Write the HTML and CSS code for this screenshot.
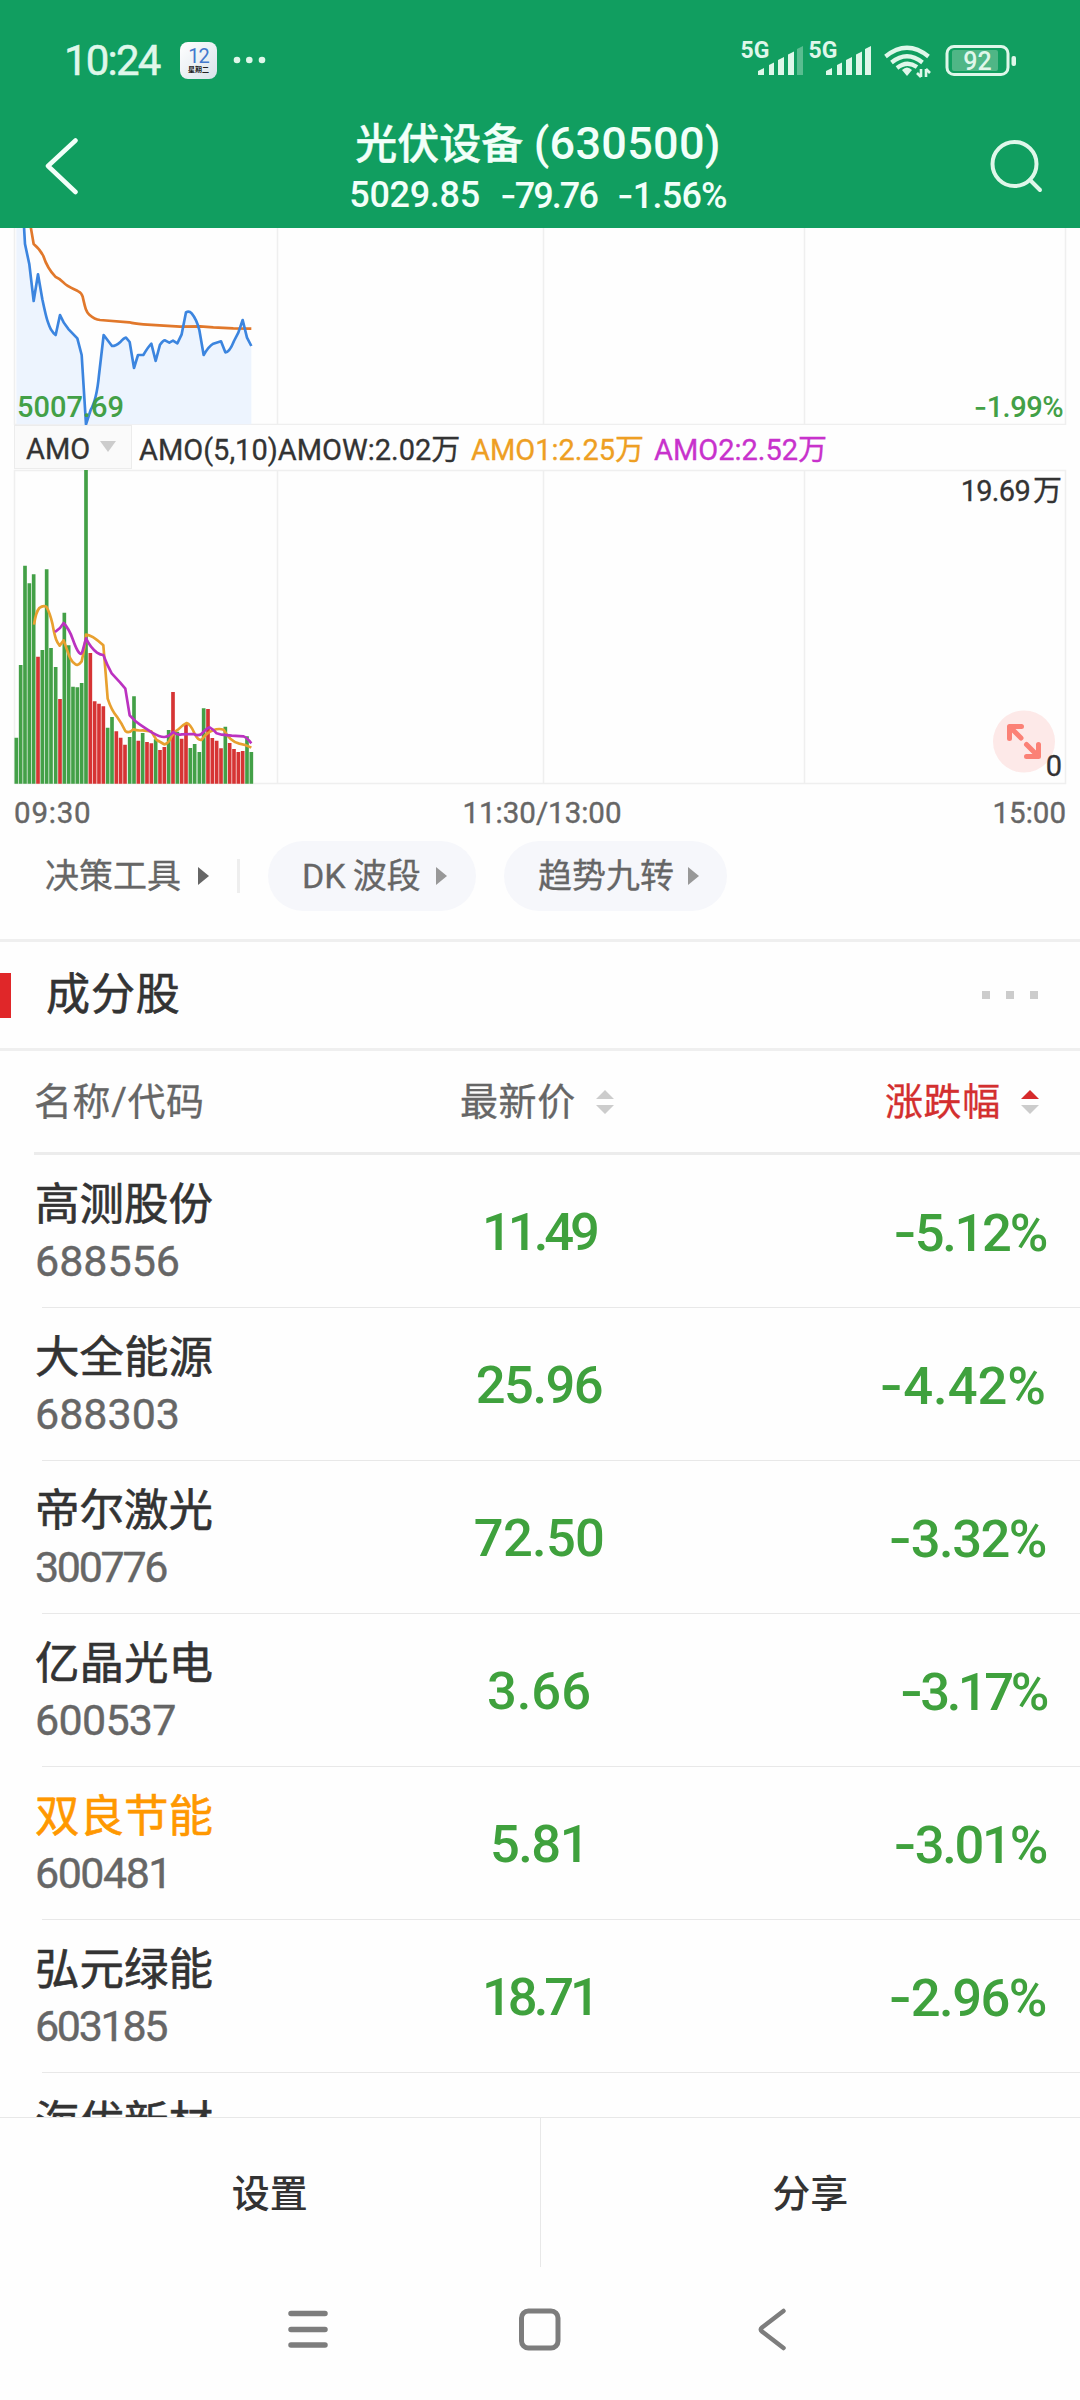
FILE: index.html
```html
<!DOCTYPE html>
<html lang="zh-CN">
<head>
<meta charset="utf-8">
<title>光伏设备 (630500)</title>
<link rel="stylesheet" href="styles.css">
</head>
<body>
<div class="screen">
  <header class="top">
    <div class="status">
      <span class="clock">10:24</span>
      <span class="calendar"><b>12</b><i>星期二</i></span>
      <svg class="more" width="34" height="10" viewBox="0 0 34 10"><circle cx="4" cy="5" r="3.3"/><circle cx="16.300" cy="5" r="3.3"/><circle cx="29" cy="5" r="3.3"/></svg>
      <svg class="signals" width="280" height="44" viewBox="0 0 280 44">
        <g class="glyph">
          <path d="M17 39v-4l6-3v7zM28 39v-10l5-2.500v12.500zM37 39v-15l6-3v18zM47 39v-20.500l6-3v23.500z"/>
          <path d="M56 39v-26l6-3v29z" opacity=".35"/>
          <g transform="translate(68)"><path d="M17 39v-4l6-3v7zM28 39v-10l5-2.500v12.500zM37 39v-15l6-3v18zM47 39v-20.500l6-3v23.500zM56 39v-26l6-3v29z"/></g>
          <path d="M161 34l5 6 5-6q-5-5-10 0z"/>
          <path d="M180 33v8M180 41l-4-4M185 41v-8M185 33l4 4" fill="none" stroke="#dff7ea" stroke-width="2.600"/>
        </g>
        <g fill="none" stroke="#dff7ea" stroke-width="4.200"><path d="M144.500 20.500q21.500-17.500 43 0M150.500 26.500q15.500-12.500 31 0M156 32q10-8 20-1"/></g>
        <rect x="206" y="10.500" width="61" height="28" rx="7" fill="none" stroke="#dff7ea" stroke-width="3"/>
        <rect x="211" y="14" width="46" height="21" rx="2" fill="#4fb686"/>
        <rect x="270.500" y="20" width="4.500" height="10" rx="2" fill="#dff7ea"/>
        <text class="net" x="-.5" y="22">5G</text><text class="net" x="67.500" y="22">5G</text>
        <text class="charge" x="236.500" y="34">92</text>
      </svg>
    </div>
    <div class="titlebar">
      <svg class="back" width="34" height="60" viewBox="0 0 34 60"><path d="M31.500 4.500L4 30l27.500 26"/></svg>
      <div class="heading">
        <h1>光伏设备 <span>(630500)</span></h1>
        <p><span>5029.85</span><span class="diff"><s>-</s>79.76</span><span class="rate"><s>-</s>1.56%</span></p>
      </div>
      <svg class="search" width="54" height="56" viewBox="0 0 54 56"><circle cx="25.500" cy="26" r="22"/><path d="M41 42L51 52"/></svg>
    </div>
  </header>

  <section class="price">
    <svg width="1080" height="197" viewBox="0 0 1080 197">
      <path class="grid" d="M14.500 0V196.500H1065.500V0M277.500 0V196M543.500 0V196M804.500 0V196"/>
      <g transform="translate(0 -8) scale(.33333)">
        <path class="area" d="M49 24H72L75 72 88 133 101 243 114 163 127 238Q138 290 142 301Q150 325 154 330L161 340 167 345 180 285Q190 310 206 328L232 355 245 405 258 613 272 570Q290 540 297 465L311 345 336 378Q348 378 362 365Q372 354 378 353L389 366 402 444 414 405H430Q445 380 454 371L467 423 480 374Q490 360 495 361L508 368 519 362 532 370 545 343 558 277Q567 271 575 280Q590 298 598 330L611 405Q627 378 640 371L663 364 676 397Q688 398 702 363L715 338 728 300 741 353 754 378V613H49Z"/>
        <path class="avg" d="M92 20L101 72Q120 88 130 108Q142 145 166 170Q180 176 190 187C203 201 222 207 235 214Q245 219 248 230C256 265 258 275 268 284Q284 298 300 300L388 307 Q400 311 430 313L540 320 600 319 640 322 700 325 754 326"/>
        <path class="line" d="M72 20L75 72 88 133 101 243 114 163 127 238Q138 290 142 301Q150 325 154 330L161 340 167 345 180 285Q190 310 206 328L232 355 245 405 258 613 272 570Q290 540 297 465L311 345 336 378Q348 378 362 365Q372 354 378 353L389 366 402 444 414 405H430Q445 380 454 371L467 423 480 374Q490 360 495 361L508 368 519 362 532 370 545 343 558 277Q567 271 575 280Q590 298 598 330L611 405Q627 378 640 371L663 364 676 397Q688 398 702 363L715 338 728 300 741 353 754 378"/>
      </g>
    </svg>
    <span class="low">5007.69</span><span class="lowpct"><s>-</s>1.99%</span>
  </section>

  <section class="legend">
    <span class="picker">AMO<svg width="16" height="12" viewBox="0 0 16 12"><path d="M0 0H16L8 11z"/></svg></span>
    <span class="amow">AMO(5,10)AMOW:2.02万</span><span class="amo1">AMO1:2.25万</span><span class="amo2">AMO2:2.52万</span>
  </section>

  <section class="volume">
    <svg width="1080" height="316" viewBox="0 0 1080 316">
      <path class="grid" d="M14.500 315V1.500H1065.500V314.500H14.500M277.500 1V315M543.500 1V315M804.500 1V315"/>
      <g transform="translate(0 -9) scale(.33333)">
        <path class="down" d="M49 971V833M62 971V615M75 971V317M88 971V370M101 971V343M127 971V570M140 971V328M153 971V564M167 971V621M193 971V458M206 971V556M219 971V680M232 971V682M245 971V669M258 971V30M323 971V803M336 971V771M389 971V831M402 971V709M428 971V819M467 971V838M506 971V810M532 971V815M571 971V864M584 971V852M598 971V876M611 971V745M676 971V800M741 971V829M754 971V876"/>
        <path class="up" d="M114 971V590M180 971V717M271 971V579M284 971V724M297 971V731M310 971V739M349 971V814M362 971V833M375 971V854M415 971V842M441 971V846M454 971V850M480 971V870M493 971V861M519 971V696M545 971V836M558 971V792M624 971V747M637 971V834M650 971V842M663 971V865M689 971V849M702 971V867M715 971V876M728 971V873"/>
        <path class="ma5" d="M102 494Q108 455 118 444Q129 435 139 440Q150 460 157 490C166 540 171 547 179 557L191 541Q196 555 202 572Q211 603 224 611Q232 621 245 604Q255 560 258 524Q275 524 310 556L317 640 323 716Q335 752 350 769Q365 790 376 813Q386 822 400 808Q411 813 428 811L454 814Q463 830 470 840Q488 850 493 853Q503 852 510 839Q520 816 535 808Q549 794 560 789Q571 792 583 819Q594 844 605 839Q621 817 640 811Q655 804 671 809Q690 845 718 851Q735 853 754 863"/>
        <path class="ma10" d="M165 516L180 504 191 489Q208 508 218 537Q230 571 238 579Q244 586 248 572L258 535Q271 562 291 578Q301 585 310 585Q321 615 335 640L360 667 376 686 389 766Q405 784 420 794L455 817Q482 832 493 831Q505 831 520 816Q530 826 545 823L580 822Q600 830 608 818Q620 805 629 802Q640 808 650 820L665 824 695 827 730 829Q740 832 754 850"/>
      </g>
      <circle cx="1024" cy="272.500" r="31" fill="#fde9e8"/>
      <g class="expand"><path d="M1009.500 269.500V257.500H1021.500M1010 258L1021 269M1026.500 287.500H1038.500V275.500M1038 287L1026.500 275.500"/></g>
    </svg>
    <span class="peak">19.69<em>万</em></span><span class="zero">0</span>
  </section>
  <div class="axis"><span>09:30</span><span>11:30/13:00</span><span>15:00</span></div>

  <div class="tools">
    <span class="tool plain">决策工具<svg width="12" height="18" viewBox="0 0 12 18"><path d="M0 0L11 9 0 18z"/></svg></span>
    <span class="rule"></span>
    <span class="tool pill dk">DK<em>波段</em><svg width="12" height="18" viewBox="0 0 12 18"><path d="M0 0L11 9 0 18z"/></svg></span>
    <span class="tool pill nine">趋势九转<svg width="12" height="18" viewBox="0 0 12 18"><path d="M0 0L11 9 0 18z"/></svg></span>
  </div>

  <div class="section-title"><h2>成分股</h2><span class="dots"><i></i><i></i><i></i></span></div>

  <div class="columns">
    <span class="c1">名称/代码</span>
    <span class="c2">最新价<svg width="18" height="26" viewBox="0 0 18 26"><path d="M0 10L9 1l9 9zM0 16h18l-9 9z"/></svg></span>
    <span class="c3">涨跌幅<svg width="18" height="26" viewBox="0 0 18 26"><path class="on" d="M0 10L9 1l9 9z"/><path d="M0 16h18l-9 9z"/></svg></span>
  </div>

  <main class="list">
    <div class="row"><div class="stock"><b>高测股份</b><i>688556</i></div><span class="last t4">11.49</span><span class="chg t2"><s>-</s>5.12%</span></div>
    <div class="row"><div class="stock"><b>大全能源</b><i>688303</i></div><span class="last t1">25.96</span><span class="chg"><s>-</s>4.42%</span></div>
    <div class="row"><div class="stock"><b>帝尔激光</b><i class="t2">300776</i></div><span class="last t05">72.50</span><span class="chg t1"><s>-</s>3.32%</span></div>
    <div class="row"><div class="stock"><b>亿晶光电</b><i class="t05">600537</i></div><span class="last">3.66</span><span class="chg t3"><s>-</s>3.17%</span></div>
    <div class="row"><div class="stock"><b class="held">双良节能</b><i class="t1">600481</i></div><span class="last t1">5.81</span><span class="chg t2"><s>-</s>3.01%</span></div>
    <div class="row"><div class="stock"><b>弘元绿能</b><i class="t2">603185</i></div><span class="last t4">18.71</span><span class="chg t1"><s>-</s>2.96%</span></div>
    <div class="row"><div class="stock"><b>海优新材</b></div></div>
  </main>

  <footer class="actions"><span>设置</span><span>分享</span></footer>
  <nav class="nav">
    <svg width="44" height="44" viewBox="0 0 44 44"><path stroke-width="5.500" d="M5 5.500h34M5 21.500h34M5 37h34"/></svg>
    <svg width="44" height="44" viewBox="0 0 44 44"><rect x="3.500" y="3" width="36.500" height="37" rx="7" stroke-width="5"/></svg>
    <svg width="44" height="44" viewBox="0 0 44 44"><path stroke-width="4.500" d="M33.500 3L12 19.500q-2.500 2 0 4L33.500 40"/></svg>
  </nav>
</div>
</body>
</html>
```
FILE: styles.css
```css
* { box-sizing: border-box; }
body { margin: 0; background: #fefefe; }
h1, h2, p { margin: 0; font-weight: 500; }
b, i, em { font-weight: inherit; font-style: normal; }
s { font-family: Inter, sans-serif; text-decoration: none; }
.screen {
  width: 1080px; height: 2400px; overflow: hidden;
  display: flex; flex-direction: column;
  font-family: Roboto, "Noto Sans CJK SC", sans-serif;
  color: #333; background: #fefefe; white-space: nowrap;
}
.screen > * { flex: none; }

/* header */
.top { height: 228px; background: #119e60; color: #f2fff9; }
.status { display: flex; height: 104px; padding: 32px 0 0 64px; color: #dff7ea; }
.clock { width: 116px; font-size: 42px; line-height: 57px; letter-spacing: -1.8px; -webkit-text-stroke: .5px; }
.calendar {
  width: 37px; height: 37px; margin-top: 10px; border-radius: 8px;
  background: linear-gradient(135deg, #fff, #d9e3ea);
  display: flex; flex-direction: column; align-items: center;
}
.calendar b { font-size: 20px; line-height: 16px; margin-top: 6px; color: #4379cd; letter-spacing: -1px; }
.calendar i { font-size: 7px; line-height: 8px; margin-top: 2px; color: #222; font-weight: 700; }
.more { margin: 23px 0 0 16px; fill: #dff7ea; }
.signals { margin: 4px 0 0 474px; overflow: visible; }
.glyph { fill: #dff7ea; }
.net { font-size: 23px; font-weight: 700; fill: #dff7ea; }
.charge { font-size: 25px; font-weight: 500; fill: #dff7ea; text-anchor: middle; }
.titlebar { display: flex; justify-content: space-between; padding: 0 37px 0 44px; }
.back { margin-top: 32px; fill: none; stroke: #f2fff9; stroke-width: 4.5; stroke-linecap: round; stroke-linejoin: round; }
.search { margin-top: 34px; fill: none; stroke: #dff7ea; stroke-width: 4; stroke-linecap: round; }
.heading { width: 400px; display: flex; flex-direction: column; align-items: center; margin-left: 9px; }
h1 { font-size: 42px; line-height: 60px; margin-top: 10px; -webkit-text-stroke: .4px; }
h1 span { font-size: 45px; letter-spacing: .3px; -webkit-text-stroke: 0; }
.heading p { display: flex; gap: 20px; font-size: 36px; line-height: 44px; margin-top: -2px; letter-spacing: -.3px; }
.diff { letter-spacing: -1.9px; }
.rate { letter-spacing: -.8px; }

/* charts */
.grid { fill: none; stroke: #efefef; stroke-width: 1.5; }
.price { position: relative; height: 197px; }
.price svg, .volume svg { display: block; }
.area { fill: #edf4fe; }
.line, .avg, .ma5, .ma10 { fill: none; stroke-linejoin: round; }
.line { stroke: #3c85df; stroke-width: 8; }
.avg { stroke: #e1782b; stroke-width: 8; }
.low, .lowpct { position: absolute; top: 162px; font-size: 29px; line-height: 34px; font-weight: 500; color: #43a047; }
.low { left: 17px; }
.lowpct { right: 17px; letter-spacing: -.5px; }
.legend { height: 44px; display: flex; align-items: center; padding-left: 14px; font-size: 29px; line-height: 44px; -webkit-text-stroke: .3px; }
.legend > span { height: 44px; padding-top: 3px; }
.legend .picker { width: 118px; padding: 4px 0 0 11px; display: flex; align-items: center; gap: 10px; background: #fafafa; border: 1px solid #ececec; }
.picker svg { fill: #ccc; margin-top: -5px; }
.amow { margin-left: 7px; width: 332px; }
.amo1 { width: 183px; color: #ee9f23; }
.amo2 { color: #c832cc; }
.volume { position: relative; height: 316px; }
.down { stroke: #43a047; stroke-width: 11; }
.up { stroke: #d63434; stroke-width: 11; }
.ma5 { stroke: #e8a02f; stroke-width: 8; }
.ma10 { stroke: #bb32c0; stroke-width: 8; }
.expand { fill: none; stroke: #fb8176; stroke-width: 5; stroke-linecap: round; stroke-linejoin: round; }
.peak, .zero { position: absolute; right: 18px; font-size: 29px; line-height: 34px; -webkit-text-stroke: .3px; }
.peak { top: 5px; letter-spacing: -.7px; }
.peak em { margin-left: 3px; letter-spacing: 0; }
.zero { top: 280px; }
.axis { height: 56px; padding: 11px 14px 0; display: flex; justify-content: space-between; font-size: 29.5px; line-height: 34px; color: #666; -webkit-text-stroke: .4px; }
.axis span:first-child { letter-spacing: .8px; }

/* tools */
.tools { height: 98px; display: flex; color: #666; font-size: 34px; line-height: 70px; -webkit-text-stroke: .3px; }
.tool { height: 70px; display: flex; align-items: center; }
.tool svg { fill: #989898; }
.plain { margin-left: 45px; width: 192px; gap: 17px; }
.plain svg { fill: #666; }
.rule { width: 3px; height: 34px; margin: 18px 28px 0 0; background: #eee; }
.pill { border-radius: 35px; background: #f6f7fb; padding-left: 34px; gap: 14px; }
.dk { width: 208px; margin-right: 28px; gap: 0; }
.dk em { margin: 0 15px 0 7px; }
.nine { width: 223px; }

.section-title { height: 112px; border: solid #efefef; border-width: 3px 0; display: flex; align-items: center; justify-content: space-between; }
h2 { font-size: 44px; line-height: 45px; font-weight: 400; border-left: 11px solid #e02729; padding-left: 35px; letter-spacing: .9px; -webkit-text-stroke: .6px; }
.dots { display: flex; gap: 16px; margin-right: 42px; }
.dots i { width: 8px; height: 8px; background: #ccc; }

/* list */
.columns { height: 104px; margin-left: 34px; border-bottom: 3px solid #ececec; display: flex; align-items: center; font-size: 38px; line-height: 56px; letter-spacing: .6px; color: #666; -webkit-text-stroke: .3px; }
.columns svg { fill: #ccc; margin-left: 20px; }
.c1 { width: 426px; }
.c2 { width: 425px; }
.c3 { color: #d32f2f; }
.c3 .on { fill: #d62a2c; }
.list { height: 962px; overflow: hidden; }
.row { position: relative; display: flex; height: 153px; padding-left: 35px; }
.row::after { content: ""; height: 1px; background: #e8e8e8; position: absolute; left: 42px; right: 0; bottom: 0; }
.stock { width: 355px; display: flex; flex-direction: column; }
.stock b { font-size: 44.5px; line-height: 56px; margin-top: 22px; -webkit-text-stroke: .6px; }
.stock i { font-size: 43px; line-height: 50px; margin-top: 3px; color: #666; -webkit-text-stroke: .4px; }
.stock .held { color: #ff9800; }
.last, .chg { font-size: 52.5px; line-height: 60px; margin-top: 47px; font-weight: 500; color: #3fa13d; }
.last { width: 298px; text-align: center; }
.chg { flex: 1; text-align: right; margin-right: 34px; }
.row .t05 { letter-spacing: -.7px; }
.row .t1 { letter-spacing: -1.5px; }
.row .t2 { letter-spacing: -2.3px; }
.row .t3 { letter-spacing: -3.4px; }
.row .t4 { letter-spacing: -4px; }

.actions { height: 150px; display: flex; border-top: 1px solid #e8e8e8; font-size: 38px; line-height: 153px; font-weight: 500; }
.actions span { flex: 1; text-align: center; }
.actions span:first-child { border-right: 1px solid #e8e8e8; }
.nav { display: flex; justify-content: center; gap: 188px; padding: 41px 1px 0 0; }
.nav svg { fill: none; stroke: #7d7d7d; stroke-linecap: round; }
```
